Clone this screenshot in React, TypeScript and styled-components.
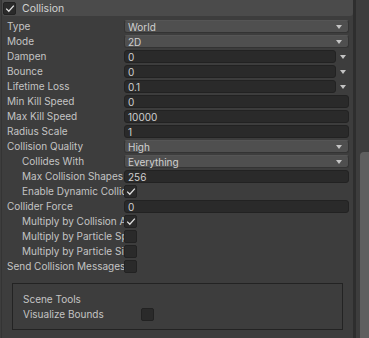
import styled, { createGlobalStyle } from 'styled-components';

const GlobalStyle = createGlobalStyle`
  html, body {
    margin: 0;
    padding: 0;
    background: #3d3d3d;
  }
  * {
    box-sizing: border-box;
  }
`;

const Panel = styled.div`
  width: 369px;
  height: 338px;
  display: flex;
  background: #3d3d3d;
  font-family: Inter, "Noto Sans", sans-serif;
  font-size: 10px;
  color: #c4c4c4;
  overflow: hidden;
`;

const Module = styled.div`
  width: 353px;
  display: flex;
  flex-direction: column;
  border-left: 1px solid #343434;
  margin-left: 1px;
`;

const Header = styled.div`
  height: 16px;
  display: flex;
  align-items: center;
  gap: 6px;
  padding-left: 1px;
  background: #4b4b4b;
  border-radius: 0 0 3px 3px;
  color: #d2d2d2;
  font-size: 10.5px;
`;

const Rows = styled.div`
  display: flex;
  flex-direction: column;
  gap: 2px;
  padding: 4px 4px 0 0;
`;

const Row = styled.div`
  display: grid;
  grid-template-columns: 122px 1fr;
  height: 13px;
  align-items: center;
`;

const Label = styled.div<{ $indent?: boolean }>`
  padding-left: ${({ $indent }) => ($indent ? '20px' : '5px')};
  white-space: nowrap;
  overflow: hidden;
  line-height: 13px;
`;

const Dropdown = styled.div`
  height: 13px;
  display: flex;
  align-items: center;
  justify-content: space-between;
  padding: 0 6px 0 3px;
  background: #4f4f4f;
  border: 1px solid #333;
  border-top-color: #555;
  border-radius: 3px;
  color: #d0d0d0;
`;

const Arrow = styled.span`
  width: 0;
  height: 0;
  border-left: 3.5px solid transparent;
  border-right: 3.5px solid transparent;
  border-top: 4px solid #c4c4c4;
`;

const FieldLine = styled.div`
  display: flex;
  align-items: center;
`;

const Field = styled.div`
  flex: 1;
  height: 13px;
  display: flex;
  align-items: center;
  padding-left: 3px;
  background: #2a2a2a;
  border: 1px solid #222;
  border-radius: 3px;
  color: #d0d0d0;
`;

const CurveArrow = styled.div`
  width: 13px;
  display: flex;
  justify-content: center;
  padding-left: 1px;
`;

const Box = styled.div`
  width: 13px;
  height: 13px;
  background: #2a2a2a;
  border: 1px solid #222;
  border-radius: 2px;
  display: flex;
  align-items: center;
  justify-content: center;
`;

const ToolsBox = styled.div`
  margin: 10px 10px 0 10px;
  height: 47px;
  border: 1px solid #232323;
  display: flex;
  flex-direction: column;
  justify-content: center;
  gap: 2px;
  padding-left: 10px;
`;

const ToolsRow = styled.div`
  display: grid;
  grid-template-columns: 118px 13px;
  height: 13px;
  align-items: center;
`;

const Scrollbar = styled.div`
  width: 16px;
  display: flex;
  border-left: 3px solid #2e2e2e;
  padding-left: 4px;
  padding-top: 152px;
`;

const Thumb = styled.div`
  flex: 1;
  background: #5f5f5f;
  border-radius: 4px 0 0 0;
`;

const Check = () => (
  <svg width="10" height="9" viewBox="0 0 10 9">
    <path d="M1.2 4.6 L3.8 7.2 L8.8 1.6" fill="none" stroke="#e0e0e0" strokeWidth="1.3" />
  </svg>
);

const CheckBox = ({ checked }: { checked?: boolean }) => (
  <Box>{checked && <Check />}</Box>
);

type Item =
  | { label: string; kind: 'dropdown'; value: string; indent?: boolean }
  | { label: string; kind: 'curve'; value: string; indent?: boolean }
  | { label: string; kind: 'field'; value: string; indent?: boolean }
  | { label: string; kind: 'check'; checked: boolean; indent?: boolean };

const items: Item[] = [
  { label: 'Type', kind: 'dropdown', value: 'World' },
  { label: 'Mode', kind: 'dropdown', value: '2D' },
  { label: 'Dampen', kind: 'curve', value: '0' },
  { label: 'Bounce', kind: 'curve', value: '0' },
  { label: 'Lifetime Loss', kind: 'curve', value: '0.1' },
  { label: 'Min Kill Speed', kind: 'field', value: '0' },
  { label: 'Max Kill Speed', kind: 'field', value: '10000' },
  { label: 'Radius Scale', kind: 'field', value: '1' },
  { label: 'Collision Quality', kind: 'dropdown', value: 'High' },
  { label: 'Collides With', kind: 'dropdown', value: 'Everything', indent: true },
  { label: 'Max Collision Shapes', kind: 'field', value: '256', indent: true },
  { label: 'Enable Dynamic Colliders', kind: 'check', checked: true, indent: true },
  { label: 'Collider Force', kind: 'field', value: '0' },
  { label: 'Multiply by Collision Angle', kind: 'check', checked: true, indent: true },
  { label: 'Multiply by Particle Speed', kind: 'check', checked: false, indent: true },
  { label: 'Multiply by Particle Size', kind: 'check', checked: false, indent: true },
  { label: 'Send Collision Messages', kind: 'check', checked: false },
];

const renderControl = (item: Item) => {
  switch (item.kind) {
    case 'dropdown':
      return (
        <Dropdown>
          <span>{item.value}</span>
          <Arrow />
        </Dropdown>
      );
    case 'curve':
      return (
        <FieldLine>
          <Field>{item.value}</Field>
          <CurveArrow>
            <Arrow />
          </CurveArrow>
        </FieldLine>
      );
    case 'field':
      return (
        <FieldLine>
          <Field>{item.value}</Field>
        </FieldLine>
      );
    case 'check':
      return <CheckBox checked={item.checked} />;
  }
};

export default function App() {
  return (
    <>
      <GlobalStyle />
      <Panel>
        <Module>
          <Header>
            <CheckBox checked />
            <span>Collision</span>
          </Header>
          <Rows>
            {items.map((item) => (
              <Row key={item.label}>
                <Label $indent={item.indent}>{item.label}</Label>
                {renderControl(item)}
              </Row>
            ))}
          </Rows>
          <ToolsBox>
            <ToolsRow>
              <span>Scene Tools</span>
            </ToolsRow>
            <ToolsRow>
              <span>Visualize Bounds</span>
              <CheckBox />
            </ToolsRow>
          </ToolsBox>
        </Module>
        <Scrollbar>
          <Thumb />
        </Scrollbar>
      </Panel>
    </>
  );
}
